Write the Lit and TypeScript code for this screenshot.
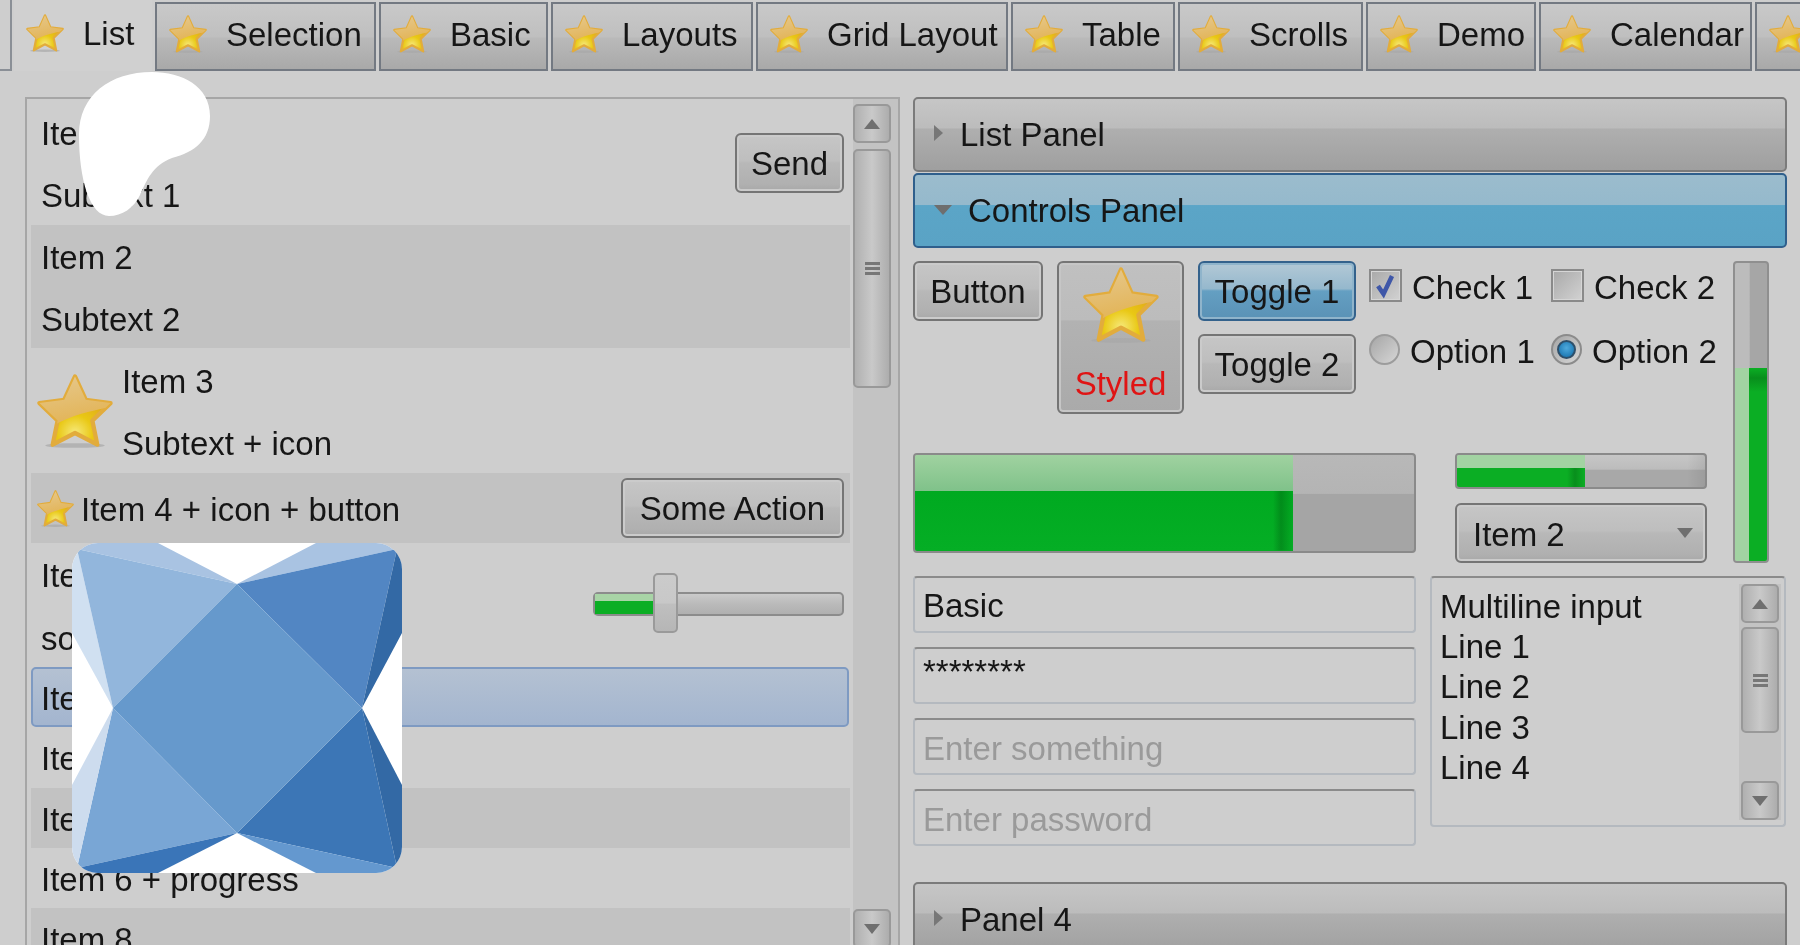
import { LitElement, html, css, svg } from "lit";
import { customElement, property } from "lit/decorators.js";
import { classMap } from "lit/directives/class-map.js";

const STAR =
  "M24 3 L30.5 17 L45.5 19 L34.5 29.5 L37.5 44 L24 37 L10.5 44 L13.5 29.5 L2.5 19 L17.5 17 Z";

@customElement("star-icon")
export class StarIcon extends LitElement {
  static override styles = css`
    :host {
      display: block;
      flex: none;
    }
    svg {
      display: block;
      width: 100%;
      height: 100%;
    }
  `;

  override render() {
    return html`
      <svg viewBox="1 1.5 46 44.5" preserveAspectRatio="none">
        <defs>
          <radialGradient id="glow" cx="50%" cy="82%" r="50%">
            <stop offset="0" stop-color="#f6e878" />
            <stop offset="0.5" stop-color="#e9c814" />
            <stop offset="1" stop-color="#e2ae18" />
          </radialGradient>
          <linearGradient id="top" x1="0.3" y1="0" x2="0.6" y2="1">
            <stop offset="0" stop-color="#e6c98f" />
            <stop offset="1" stop-color="#e2b04c" />
          </linearGradient>
          <clipPath id="upper"><path d=${STAR} /></clipPath>
        </defs>
        <ellipse cx="24" cy="44.5" rx="18" ry="1.4" fill="#a8a8a8" opacity="0.7" />
        <path d=${STAR} fill="url(#glow)" stroke="#e2ac3c" stroke-width="2.6" stroke-linejoin="round" />
        <path
          d="M0 0 H48 V21 C36 23 22 26 10 33 L0 36 Z"
          fill="url(#top)"
          clip-path="url(#upper)"
        />
      </svg>
    `;
  }
}

@customElement("haxe-logo")
export class HaxeLogo extends LitElement {
  @property({ type: Number }) size = 330;

  static override styles = css`
    :host {
      display: block;
      border-radius: 26px;
      overflow: hidden;
      background: #fff;
    }
    svg {
      display: block;
      filter: blur(0.4px);
    }
  `;

  override render() {
    const facets: [string, string][] = [
      ["0,0 86,0 165,41 5,6", "#a9c3e2"],
      ["0,8 5,6 41,165 0,90", "#d0e0f1"],
      ["5,6 165,41 41,165", "#92b6dc"],
      ["244,0 330,0 325,6 165,41", "#a9c3e2"],
      ["165,41 325,6 290,165", "#5286c3"],
      ["325,6 330,0 330,90 290,165", "#3369a5"],
      ["41,165 165,290 5,325", "#79a6d5"],
      ["0,242 41,165 5,325 0,330", "#cddcee"],
      ["5,325 165,290 86,330 0,330", "#3a75b8"],
      ["290,165 325,325 165,290", "#3c76b6"],
      ["290,165 330,242 330,330 325,325", "#3369a5"],
      ["165,290 325,325 330,330 244,330", "#6498cf"],
      ["165,41 290,165 165,290 41,165", "#6699cc"],
    ];
    return html`
      <svg viewBox="0 0 330 330" width=${this.size} height=${this.size}>
        ${facets.map(([points, fill]) => svg`<polygon points=${points} fill=${fill} />`)}
      </svg>
    `;
  }
}

type Row = {
  h: number;
  lines: string[];
  dark?: boolean;
  selected?: boolean;
  star?: "big" | "small";
  action?: string;
  slider?: boolean;
};

const TABS = [
  { label: "List", width: 138 },
  { label: "Selection", width: 221 },
  { label: "Basic", width: 169 },
  { label: "Layouts", width: 202 },
  { label: "Grid Layout", width: 252 },
  { label: "Table", width: 164 },
  { label: "Scrolls", width: 185 },
  { label: "Demo", width: 170 },
  { label: "Calendar", width: 213 },
  { label: "", width: 60 },
];

const ROWS: Row[] = [
  { h: 125, lines: ["Item 1", "Subtext 1"], action: "Send" },
  { h: 123, lines: ["Item 2", "Subtext 2"], dark: true },
  { h: 125, lines: ["Item 3", "Subtext + icon"], star: "big" },
  { h: 70, lines: ["Item 4 + icon + button"], dark: true, star: "small", action: "Some Action" },
  { h: 124, lines: ["Item 5 + slider", "some subtext"], slider: true },
  { h: 60, lines: ["Item 5"], selected: true },
  { h: 61, lines: ["Item 6"] },
  { h: 60, lines: ["Item 7"], dark: true },
  { h: 60, lines: ["Item 6 + progress"] },
  { h: 60, lines: ["Item 8"], dark: true },
];

@customElement("app-root")
export class AppRoot extends LitElement {
  static override styles = css`
    :host {
      display: block;
      position: relative;
      width: 1800px;
      height: 945px;
      overflow: hidden;
      background: #cecece;
      font-family: "Liberation Sans", Arial, sans-serif;
      font-size: 33px;
      color: #161616;
    }

    .ui {
      height: 945px;
      filter: blur(0.7px);
    }

    /* tab strip */
    .tabs {
      display: flex;
      height: 71px;
      gap: 3px;
      white-space: nowrap;
    }
    .tab-edge {
      flex: none;
      box-sizing: border-box;
      width: 12px;
      margin-right: -1px;
      border: solid #8a8f96;
      border-width: 0 2px 2px 0;
    }
    .tab {
      flex: none;
      display: flex;
      align-items: center;
      gap: 19px;
      box-sizing: border-box;
      height: 69px;
      margin-top: 2px;
      padding: 0 0 4px 12px;
      border: 2px solid #737982;
      background: linear-gradient(#c9c9c9, #bfbfbf 50%, #b9b9b9 53%, #a9a9a9);
    }
    .tab.active {
      height: 71px;
      margin-top: 0;
      border: none;
      background: #d0d0d0;
    }
    .tab star-icon {
      width: 38px;
      height: 38px;
      margin-top: -2px;
    }

    .main {
      display: flex;
      gap: 13px;
      padding: 26px 0 0 25px;
    }

    /* left list */
    .listbox {
      flex: none;
      display: flex;
      box-sizing: border-box;
      width: 875px;
      height: 860px;
      padding-left: 4px;
      border: 2px solid #a6a6a6;
      border-bottom: none;
    }
    .rows {
      flex: none;
      width: 819px;
      padding-top: 1px;
    }
    .row {
      display: flex;
      align-items: center;
      box-sizing: border-box;
      padding: 0 6px 0 10px;
    }
    .row.dark {
      background: #c2c2c2;
    }
    .row.selected {
      background: linear-gradient(#b4c1d2, #a3b5cf);
      border: 2px solid #7e9ac2;
      border-radius: 5px;
      padding-left: 8px;
      margin-right: 1px;
    }
    .row.big {
      padding-left: 6px;
    }
    .row.small {
      padding-left: 6px;
      gap: 7px;
    }
    .row star-icon.big {
      width: 76px;
      height: 74px;
      margin-right: 9px;
    }
    .row star-icon.small {
      width: 37px;
      height: 37px;
    }
    .lines {
      flex: 1;
      padding-top: 3px;
    }
    .lines div {
      height: 62.5px;
      line-height: 63px;
    }
    .row.one .lines div {
      height: auto;
      line-height: 40px;
    }

    .btn {
      box-sizing: border-box;
      height: 60px;
      line-height: 57px;
      text-align: center;
      border: 2px solid #757575;
      border-radius: 6px;
      box-shadow: inset 0 0 0 2px #cbcbcb;
      background: linear-gradient(#c6c6c6, #bebebe 46%, #b8b8b8 50%, #b0b0b0 88%, #a8a8a8);
    }
    .btn.send {
      width: 109px;
    }
    .btn.action {
      width: 223px;
    }
    .btn.on {
      border-color: #34628c;
      box-shadow: inset 0 0 0 2px #8fb4cb;
      background: linear-gradient(#b3c9d6, #95b8cd 46%, #649fc2 50%, #5a92b6);
    }

    /* slider */
    .slider {
      position: relative;
      flex: none;
      box-sizing: border-box;
      width: 251px;
      height: 24px;
      margin-top: -2px;
      border: 2px solid #8c8c8c;
      border-radius: 5px;
      background: linear-gradient(#cacaca, #bababa 50%, #b0b0b0);
    }
    .slider i {
      display: block;
      width: 60px;
      height: 100%;
      background: linear-gradient(#a8d4a6 35%, #0bae24 36%);
    }
    .slider b {
      position: absolute;
      left: 58px;
      top: -21px;
      box-sizing: border-box;
      width: 25px;
      height: 60px;
      border: 2px solid #9a9a9a;
      border-radius: 5px;
      background: linear-gradient(#cbcbcb, #c8c8c8 50%, #bfbfbf 52%, #b6b6b6);
    }

    /* scrollbars */
    .track {
      flex: none;
      display: flex;
      flex-direction: column;
      box-sizing: border-box;
      background: #c3c3c3;
    }
    .listbox .track {
      width: 45px;
      margin-left: 3px;
      padding-top: 5px;
    }
    .sb-btn,
    .sb-thumb {
      box-sizing: border-box;
      flex: none;
      width: 38px;
      border: 2px solid #999;
      border-radius: 5px;
      background: linear-gradient(90deg, #b0b0b0, #c9c9c9 50%, #adadad);
    }
    .sb-btn {
      height: 39px;
      display: flex;
      align-items: center;
      justify-content: center;
    }
    .up,
    .down {
      width: 0;
      height: 0;
      border: 8px solid transparent;
    }
    .up {
      border-top: none;
      border-bottom: 10px solid #6f6f6f;
    }
    .down {
      border-bottom: none;
      border-top: 10px solid #6f6f6f;
    }
    .sb-thumb {
      margin-top: 6px;
      height: 239px;
      display: flex;
      flex-direction: column;
      align-items: center;
      justify-content: center;
      gap: 2px;
    }
    .sb-thumb span {
      width: 15px;
      height: 3px;
      background: #777;
    }
    .listbox .gap {
      height: 521px;
      flex: none;
    }

    /* right side */
    .side {
      flex: none;
      width: 874px;
    }
    .panel {
      display: flex;
      align-items: center;
      box-sizing: border-box;
      height: 75px;
      padding: 1px 0 0 19px;
      gap: 17px;
      border: 2px solid #7b7b7b;
      border-radius: 5px;
      background: linear-gradient(#c6c6c6, #bcbcbc 41%, #afafaf 42%, #9f9f9f);
    }
    .panel.open {
      margin-top: 1px;
      gap: 16px;
      border-color: #2f5f8c;
      background: linear-gradient(#9bbccd, #95b9cc 42%, #5ba5c7 43%, #5aa3c5);
    }
    .panel.last {
      margin-top: 36px;
    }
    .arrow-r {
      width: 0;
      height: 0;
      border: 8px solid transparent;
      border-right: none;
      border-left: 9px solid #777;
      margin-top: -4px;
    }
    .arrow-d {
      width: 0;
      height: 0;
      border: 9px solid transparent;
      border-bottom: none;
      border-top: 10px solid #6e6e6e;
      margin-top: -3px;
    }

    .controls {
      display: flex;
      gap: 26px;
      margin-top: 13px;
    }
    .ctl-left {
      flex: none;
      width: 794px;
    }
    .ctl-top {
      display: flex;
      height: 153px;
    }
    .b-plain {
      flex: none;
      width: 130px;
    }
    .b-styled {
      flex: none;
      display: flex;
      flex-direction: column;
      align-items: center;
      box-sizing: border-box;
      width: 127px;
      height: 153px;
      margin-left: 14px;
      padding-top: 4px;
      border: 2px solid #757575;
      border-radius: 6px;
      box-shadow: inset 0 0 0 2px #c6c6c6;
      background: linear-gradient(#c0c0c0, #bcbcbc 38%, #b2b2b2 39%, #aaaaaa);
      color: #e01414;
    }
    .b-styled star-icon {
      width: 76px;
      height: 76px;
    }
    .b-styled span {
      line-height: 38px;
      margin-top: 22px;
    }
    .toggles {
      flex: none;
      display: flex;
      flex-direction: column;
      gap: 13px;
      width: 158px;
      margin-left: 14px;
    }
    .opts {
      flex: none;
      display: grid;
      grid-template-columns: 182px 163px;
      grid-auto-rows: 64px;
      margin-left: 13px;
      white-space: nowrap;
    }
    .opt {
      display: flex;
      align-items: center;
      gap: 10px;
      height: 50px;
    }
    .opt span {
      margin-top: 3px;
    }
    .check {
      flex: none;
      box-sizing: border-box;
      width: 33px;
      height: 33px;
      margin-top: -2px;
      border: 2px solid #8a8a8a;
      background: linear-gradient(135deg, #a9a9a9, #d2d2d2);
      box-shadow: inset 0 0 0 1px #d6d6d6;
    }
    .check svg {
      display: block;
    }
    .radio {
      flex: none;
      box-sizing: border-box;
      display: flex;
      align-items: center;
      justify-content: center;
      width: 31px;
      height: 31px;
      margin-top: -2px;
      border: 2px solid #9c9c9c;
      border-radius: 50%;
      background: linear-gradient(135deg, #a6a6a6, #d6d6d6);
    }
    .radio.on {
      border-color: #8b8b8b;
    }
    .radio.on i {
      display: block;
      box-sizing: border-box;
      width: 19px;
      height: 19px;
      border-radius: 50%;
      border: 2px solid #2e4f6a;
      background: radial-gradient(circle at 50% 40%, #4ea9dc, #0f6ba8);
    }
    .ctl-bottom {
      display: flex;
      gap: 39px;
      margin-top: 39px;
    }
    .bar {
      position: relative;
      box-sizing: border-box;
      border: 2px solid #8a8a8a;
      border-radius: 4px;
      overflow: hidden;
      background: linear-gradient(#b8b8b8, #b4b4b4 40%, #a5a5a5 41%, #a5a5a5);
    }
    .bar.big {
      flex: none;
      width: 503px;
      height: 100px;
    }
    .bar.small {
      height: 36px;
      background:
        linear-gradient(90deg, transparent calc(100% - 18px), rgba(0, 0, 0, 0.07)),
        linear-gradient(#c6c6c6, #bcbcbc 45%, #a8a8a8 46%, #a8a8a8);
    }
    .fill {
      height: 100%;
      background:
        linear-gradient(90deg, transparent calc(100% - 20px), rgba(0, 70, 10, 0.3) calc(100% - 12px), transparent) right
          bottom / 100% 62% no-repeat,
        linear-gradient(#a0d2a0, #80c28a 37%, #00aa20 38%, #05ae25);
    }
    .bar.small .fill {
      background:
        linear-gradient(90deg, transparent calc(100% - 18px), rgba(0, 70, 10, 0.3) calc(100% - 10px), transparent) right
          bottom / 100% 60% no-repeat,
        linear-gradient(#a2d3a2 40%, #0bae24 41%);
    }
    .ctl-stack {
      flex: none;
      display: flex;
      flex-direction: column;
      gap: 14px;
      width: 252px;
    }
    .combo {
      display: flex;
      align-items: center;
      justify-content: space-between;
      padding: 4px 12px 0 16px;
      line-height: normal;
    }
    .combo .down {
      margin-top: -4px;
    }
    .vbar {
      flex: none;
      display: flex;
      flex-direction: column;
      justify-content: flex-end;
      box-sizing: border-box;
      width: 36px;
      height: 302px;
      border: 2px solid #8f8f8f;
      border-radius: 4px;
      overflow: hidden;
      background: linear-gradient(90deg, #bcbcbc 45%, #a6a6a6 46%);
    }
    .vfill {
      background:
        linear-gradient(transparent 0, rgba(0, 70, 10, 0.3) 10px, transparent 24px) right top / 56% 100% no-repeat,
        linear-gradient(90deg, #a2d3a2 43%, #0bae24 44%);
    }

    .fields {
      display: flex;
      gap: 14px;
      margin-top: 13px;
    }
    .inputs {
      flex: none;
      display: flex;
      flex-direction: column;
      gap: 14px;
      width: 503px;
    }
    .input,
    .multi {
      box-sizing: border-box;
      border: 2px solid #b4b9bf;
      border-top-color: #8b8b8b;
      border-radius: 4px;
    }
    .input {
      height: 57px;
      line-height: 55px;
      padding-left: 8px;
    }
    .input.pass {
      line-height: 46px;
    }
    .input.hint {
      line-height: 58px;
      color: #9a9a9a;
    }
    .multi {
      flex: none;
      display: flex;
      justify-content: space-between;
      width: 356px;
      height: 251px;
      padding: 6px 3px 5px 8px;
    }
    .multi .text {
      line-height: 40.2px;
      padding-top: 3px;
    }
    .multi .track {
      width: 42px;
      padding-left: 2px;
    }
    .multi .sb-thumb {
      margin-top: 4px;
      height: 106px;
    }
    .multi .gap {
      flex: none;
      height: 48px;
    }

    /* things lying over the whole ui */
    .blob {
      position: absolute;
      left: 0;
      top: 0;
      display: block;
    }
    haxe-logo {
      position: absolute;
      left: 72px;
      top: 543px;
      width: 330px;
      height: 330px;
    }
  `;

  private scrollBtn(dir: "up" | "down") {
    return html`<div class="sb-btn"><div class=${dir}></div></div>`;
  }

  private grip() {
    return html`<span></span><span></span><span></span>`;
  }

  private renderRow(row: Row) {
    const classes = {
      row: true,
      dark: !!row.dark,
      selected: !!row.selected,
      one: row.lines.length === 1,
      big: row.star === "big",
      small: row.star === "small",
    };
    return html`
      <div class=${classMap(classes)} style="height:${row.h}px">
        ${row.star ? html`<star-icon class=${row.star}></star-icon>` : ""}
        <div class="lines">${row.lines.map((line) => html`<div>${line}</div>`)}</div>
        ${row.action
          ? html`<div class="btn ${row.action === "Send" ? "send" : "action"}">${row.action}</div>`
          : ""}
        ${row.slider ? html`<div class="slider"><i></i><b></b></div>` : ""}
      </div>
    `;
  }

  override render() {
    return html`
      <div class="ui">
        <div class="tabs">
          <div class="tab-edge"></div>
          ${TABS.map(
            (tab, i) => html`
              <div class="tab ${i === 0 ? "active" : ""}" style="width:${tab.width}px">
                <star-icon></star-icon>
                ${tab.label}
              </div>
            `
          )}
        </div>

        <div class="main">
          <div class="listbox">
            <div class="rows">${ROWS.map((row) => this.renderRow(row))}</div>
            <div class="track">
              ${this.scrollBtn("up")}
              <div class="sb-thumb">${this.grip()}</div>
              <div class="gap"></div>
              ${this.scrollBtn("down")}
            </div>
          </div>

          <div class="side">
            <div class="panel"><div class="arrow-r"></div>List Panel</div>
            <div class="panel open"><div class="arrow-d"></div>Controls Panel</div>

            <div class="controls">
              <div class="ctl-left">
                <div class="ctl-top">
                  <div class="btn b-plain">Button</div>
                  <div class="b-styled">
                    <star-icon></star-icon>
                    <span>Styled</span>
                  </div>
                  <div class="toggles">
                    <div class="btn on">Toggle 1</div>
                    <div class="btn">Toggle 2</div>
                  </div>
                  <div class="opts">
                    <div class="opt">
                      <div class="check">
                        <svg viewBox="0 0 29 29" width="29" height="29">
                          <path d="M7 15 L12.5 23 L21 5" fill="none" stroke="#3f57a8" stroke-width="4.5" />
                        </svg>
                      </div>
                      <span>Check 1</span>
                    </div>
                    <div class="opt"><div class="check"></div><span>Check 2</span></div>
                    <div class="opt"><div class="radio"></div><span>Option 1</span></div>
                    <div class="opt"><div class="radio on"><i></i></div><span>Option 2</span></div>
                  </div>
                </div>
                <div class="ctl-bottom">
                  <div class="bar big"><div class="fill" style="width:${(378 / 499) * 100}%"></div></div>
                  <div class="ctl-stack">
                    <div class="bar small"><div class="fill" style="width:${(128 / 248) * 100}%"></div></div>
                    <div class="btn combo">Item 2<div class="down"></div></div>
                  </div>
                </div>
              </div>
              <div class="vbar"><div class="vfill" style="height:${(193 / 298) * 100}%"></div></div>
            </div>

            <div class="fields">
              <div class="inputs">
                <div class="input">Basic</div>
                <div class="input pass">********</div>
                <div class="input hint">Enter something</div>
                <div class="input hint">Enter password</div>
              </div>
              <div class="multi">
                <div class="text">
                  Multiline input<br />Line 1<br />Line 2<br />Line 3<br />Line 4
                </div>
                <div class="track">
                  ${this.scrollBtn("up")}
                  <div class="sb-thumb">${this.grip()}</div>
                  <div class="gap"></div>
                  ${this.scrollBtn("down")}
                </div>
              </div>
            </div>

            <div class="panel last"><div class="arrow-r"></div>Panel 4</div>
          </div>
        </div>
      </div>

      <haxe-logo></haxe-logo>
      <svg class="blob" width="240" height="230" viewBox="0 0 240 230">
        <path
          fill="#fff"
          d="M152 72 C182 72 210 86 210 116 C210 140 195 152 172 158 C152 166 147 180 140 195 C134 208 122 216 109 216 C90 216 79 180 79 135 C79 95 110 72 152 72 Z"
        />
      </svg>
    `;
  }
}
